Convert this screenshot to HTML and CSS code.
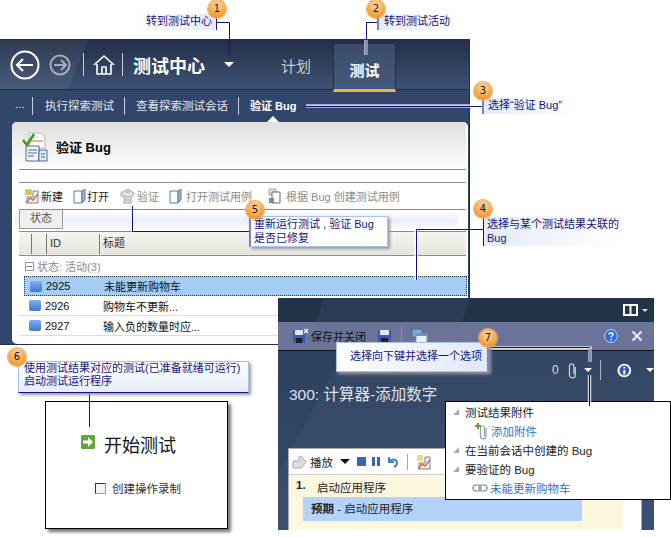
FILE: index.html
```html
<!DOCTYPE html>
<html lang="zh-CN">
<head>
    <meta charset="UTF-8">
    <title>验证 Bug</title>
    <link rel="stylesheet" href="styles.css">
</head>
<body>
<div class="figure">

    <!-- test center window -->
    <div class="window center">
        <div class="topbar">
            <svg class="nav-ico back" width="30" height="30" viewBox="0 0 30 30"><circle cx="15" cy="15" r="13.5" fill="none" stroke="#fff" stroke-width="2"/><path d="M23 15H8M13 9l-6 6 6 6" fill="none" stroke="#fff" stroke-width="2"/></svg>
            <svg class="nav-ico fwd" width="22" height="22" viewBox="0 0 22 22"><circle cx="11" cy="11" r="9.5" fill="none" stroke="#a6adb8" stroke-width="2"/><path d="M5 11h11M12 6l5 5-5 5" fill="none" stroke="#a6adb8" stroke-width="2"/></svg>
            <span class="nav-sep"></span>
            <svg class="nav-ico home" width="22" height="22" viewBox="0 0 22 22"><path d="M1 11 11 2l10 9M4 10v10h14V10M9 20v-7h4v7" fill="none" stroke="#fff" stroke-width="1.6"/></svg>
            <span class="nav-sep"></span>
            <b class="app-title">测试中心</b>
            <span class="caret big"></span>
            <span class="tab">计划</span>
            <span class="tab active">测试</span>
        </div>
        <div class="subnav">
            <span class="sub-more">...</span>
            <span class="sub-item">执行探索测试</span>
            <span class="sub-item">查看探索测试会话</span>
            <span class="sub-item current">验证 Bug</span>
        </div>
        <div class="panel">
            <div class="panel-head">
                <svg width="26" height="30" viewBox="0 0 26 30"><path d="M7 1h12l4 4v11H7z" fill="#fff" stroke="#a9b4c4"/><path d="M9 9h12" stroke="#d9662a"/><path d="M11 5h6" stroke="#c5ccd8"/><path d="M4 14h13v15H4z" fill="#f0f3f8" stroke="#4f6c92"/><path d="M17 18h8v11h-8z" fill="#dfe6f0" stroke="#4f6c92"/><path d="M6 18h9M6 21h9M6 24h6M19 22h4M19 25h4" stroke="#4f6c92"/><path d="M1 8l4 5 7-11" fill="none" stroke="#3f9a1c" stroke-width="2.6"/></svg>
                <b>验证 Bug</b>
            </div>
            <div class="toolbar">
                <span class="tool"><svg width="16" height="16" viewBox="0 0 16 16"><path d="M1 1h7v6H1z" fill="#f3d77e"/><path d="M1 3h7M1 5h7M3 1v6M5.500 1v6" stroke="#c9a53a" stroke-width=".7"/><path d="M9 3h5v12H3V9h6z" fill="#eef2f8" stroke="#6c85aa"/><path d="M2 15l4-5 3 2 5-6" fill="none" stroke="#d9662a" stroke-width="1.4"/></svg>新建</span>
                <span class="tool"><svg width="13" height="16" viewBox="0 0 13 16"><path d="M1 3h8v12H1z" fill="#fff" stroke="#5d7a9e"/><path d="M9 3l3-2v11l-3 3z" fill="#9db3cf" stroke="#5d7a9e"/></svg>打开</span>
                <span class="tool off"><svg width="17" height="16" viewBox="0 0 17 16"><path d="M2 5 9 1l6 4-1 3h-2v7H5V8H2z" fill="#e2e2e2" stroke="#a5a5a5"/><path d="M6 9h5M6 12h5M7 4h4" stroke="#a5a5a5"/></svg>验证</span>
                <span class="tool off wide"><svg width="13" height="16" viewBox="0 0 13 16"><path d="M1 3h8v12H1z" fill="#fff" stroke="#5d7a9e"/><path d="M9 3l3-2v11l-3 3z" fill="#9db3cf" stroke="#5d7a9e"/></svg><i class="tgap"></i>打开测试用例</span>
                <span class="tool off"><svg width="15" height="16" viewBox="0 0 15 16"><path d="M2 1h7v6H2z" fill="#ddd" stroke="#aaa"/><path d="M5 4h8v11H5z" fill="#fff" stroke="#666"/><path d="M2 10h5v5H2z" fill="#888"/></svg><i class="tgap"></i>根据 Bug 创建测试用例</span>
            </div>
            <div class="group-band"><span class="group-btn">状态</span></div>
            <div class="list-head">
                <span class="col c1"></span><span class="col c2"></span>
                <span class="col c3">ID</span><span class="col c4">标题</span>
            </div>
            <div class="group-row"><span class="minus"></span>状态: 活动(3)</div>
            <div class="row selected"><span class="sq"></span><span class="id">2925</span><span>未能更新购物车</span></div>
            <div class="row"><span class="sq"></span><span class="id">2926</span><span>购物车不更新...</span></div>
            <div class="row"><span class="sq"></span><span class="id">2927</span><span>输入负的数量时应...</span></div>
        </div>
    </div>

    <!-- test runner window -->
    <div class="window runner">
        <div class="run-top">
            <svg width="15" height="12" viewBox="0 0 15 12"><path d="M1 1h13v10H1zM7.5 1v10" fill="none" stroke="#fff" stroke-width="2"/></svg>
            <span class="caret small"></span>
        </div>
        <div class="run-tools">
            <svg width="17" height="16" viewBox="0 0 17 16"><path d="M1 2h12v13H1z" fill="#3c57b0"/><path d="M3 2h8v5H3z" fill="#dfe6f5"/><path d="M4 10h6v5H4z" fill="#222"/><path d="M12 1l4 4M16 1l-4 4" stroke="#fff" stroke-width="1.3"/></svg>
            <span class="save-label">保存并关闭</span>
            <svg class="save2" width="15" height="15" viewBox="0 0 15 15"><path d="M1 1h13v13H1z" fill="#3c57b0"/><path d="M3 1h9v5H3z" fill="#dfe6f5"/><path d="M4 9h7v5H4z" fill="#222"/></svg>
            <span class="tool-sep"></span>
            <svg width="17" height="16" viewBox="0 0 17 16"><path d="M1 1h10v8H1z" fill="#7fa6d6" stroke="#3f6ea8"/><path d="M5 6h11v9H5z" fill="#e8eef7" stroke="#8a97ad"/><path d="M5 6h11v2H5z" fill="#6f95c6"/></svg>
            <span class="push"></span>
            <svg class="help" width="14" height="14" viewBox="0 0 14 14"><circle cx="7" cy="7" r="6.5" fill="#2f6fd0" stroke="#bcd3f2"/><path d="M5 5.5C5 3.5 9 3.5 9 5.5 9 7 7 7 7 8.500M7 10v1.500" fill="none" stroke="#fff" stroke-width="1.400"/></svg>
            <svg width="12" height="12" viewBox="0 0 12 12"><path d="M1.500 1.500l9 9M10.500 1.500l-9 9" stroke="#e2e4ec" stroke-width="2.400"/></svg>
        </div>
        <div class="run-body">
            <div class="status-line">
                <span class="count">0</span>
                <svg width="9" height="17" viewBox="0 0 9 17"><path d="M7.500 5v8a3 3 0 0 1-6 0V4a2.200 2.200 0 0 1 4.500 0v8" fill="none" stroke="#c6cbd4" stroke-width="1.300"/></svg>
                <span class="caret mid"></span>
                <span class="status-sep"></span>
                <svg width="15" height="15" viewBox="0 0 15 15"><circle cx="7.500" cy="7.500" r="7" fill="#fff"/><circle cx="7.500" cy="7.500" r="5" fill="#2f56b0"/><path d="M7.500 4v1.500M7.500 7v4.500" stroke="#fff" stroke-width="2"/></svg>
                <span class="caret mid last"></span>
            </div>
            <h2 class="run-title">300: 计算器-添加数字</h2>
            <div class="steps">
                <div class="steps-bar">
                    <svg width="15" height="14" viewBox="0 0 15 14"><path d="M1 6h6V2l2-1 5 6-5 6H1z" fill="#ddd" stroke="#aaa"/></svg>
                    <span class="play">播放</span>
                    <span class="caret black"></span>
                    <span class="stop"></span>
                    <span class="pause"></span>
                    <svg width="13" height="12" viewBox="0 0 13 12"><path d="M3 1v5h5M3 6c3-4 8-3 8 1 0 2-1 3-3 4" fill="none" stroke="#3f7fd0" stroke-width="2"/></svg>
                    <span class="bar-sep"></span>
                    <svg width="16" height="16" viewBox="0 0 16 16"><path d="M1 1h6v6H1z" fill="#f3d77e"/><path d="M9 3h5v12H3V9h6z" fill="#eef2f8" stroke="#6c85aa"/><path d="M2 15l4-5 3 2 5-6" fill="none" stroke="#d9662a" stroke-width="1.400"/></svg>
                </div>
                <div class="steps-list">
                    <div class="step"><b>1.</b><span>启动应用程序</span></div>
                    <div class="expected"><b>预期</b> - 启动应用程序</div>
                </div>
            </div>
        </div>
    </div>

    <!-- attachments dropdown -->
    <div class="popup">
        <div class="pop-row"><span class="tri"></span>测试结果附件</div>
        <div class="pop-row sub link">
            <svg width="17" height="18" viewBox="0 0 17 18"><path d="M12 6v8a2.800 2.800 0 0 1-5.600 0V6a2 2 0 0 1 4 0v8" fill="none" stroke="#8d9bae" stroke-width="1.200"/><path d="M1 3h2V1h2v2h2v2H5v2H3V5H1z" fill="#5aa83c"/></svg>
            添加附件
        </div>
        <div class="pop-row"><span class="tri"></span>在当前会话中创建的 Bug</div>
        <div class="pop-row"><span class="tri"></span>要验证的 Bug</div>
        <div class="pop-row sub link bug">
            <svg width="16" height="8" viewBox="0 0 16 8"><rect x="1" y="1" width="8" height="6" rx="3" fill="none" stroke="#9aa3ad" stroke-width="1.500"/><rect x="7" y="1" width="8" height="6" rx="3" fill="none" stroke="#9aa3ad" stroke-width="1.500"/></svg>
            未能更新购物车
        </div>
    </div>

    <!-- start dialog -->
    <div class="start-box">
        <div class="start-title">
            <svg width="14" height="14" viewBox="0 0 14 14"><rect width="14" height="14" rx="1.500" fill="#5da83a"/><path d="M2 5.500h5V2l5 5-5 5V8.500H2z" fill="#fff"/></svg>
            开始测试
        </div>
        <label class="start-check"><span class="box"></span>创建操作录制</label>
    </div>

    <!-- leader lines -->
    <svg class="leaders" width="671" height="537" viewBox="0 0 671 537">
        <g class="halo">
            <path d="M366 40V55"/>
            <path d="M306 106H482"/>
            <path d="M416 229V280"/>
            <path d="M590 362V348H488"/>
            <path d="M589.500 375V406"/>
        </g>
        <g class="line">
            <path d="M217 22.500H229.500V55"/>
            <path d="M377 22.500H366.500V55"/>
            <path d="M306 106.500H482"/>
            <path d="M416.500 280V229.500H483"/>
            <path d="M132.500 206V231.500H249"/>
            <path d="M89.500 393V427"/>
            <path d="M488 347.500H590"/>
            <path d="M589.500 375V406"/>
        </g>
        <path class="thick" d="M366.500 40V55"/>
        <path class="thick" d="M590 349V362"/>
    </svg>

    <!-- callouts -->
    <div class="note n1">转到测试中心</div>
    <div class="note n2">转到测试活动</div>
    <div class="note n3">选择“验证 Bug”</div>
    <div class="note n4">选择与某个测试结果关联的<br>Bug</div>
    <div class="note box n5">重新运行测试 , 验证 Bug<br>是否已修复</div>
    <div class="note box n6">使用测试结果对应的测试(已准备就绪可运行)<br>启动测试运行程序</div>
    <div class="note box n7">选择向下键并选择一个选项</div>

    <span class="badge b1">1</span>
    <span class="badge b2">2</span>
    <span class="badge b3">3</span>
    <span class="badge b4">4</span>
    <span class="badge b5">5</span>
    <span class="badge b6">6</span>
    <span class="badge b7">7</span>
</div>
</body>
</html>
```

FILE: styles.css
```css
*{
    box-sizing: border-box;
}

body{
    margin: 0;
    background: #fff;
    font-family: "Liberation Sans", "Noto Sans CJK SC", sans-serif;
    font-size: 11px;
    color: #222;
}

.figure{
    position: relative;
    width: 671px;
    height: 537px;
    overflow: hidden;
}

.window{
    position: absolute;
}

/* test center window */
.center{
    left: 0;
    top: 39px;
    width: 470px;
    height: 306px;
    background: #31466a;
    border-right: 1px solid #1f2f4c;
    border-bottom: 1px solid #1f2f4c;
}

.topbar{
    display: flex;
    align-items: center;
    height: 51px;
    padding-left: 10px;
    border-top: 1px solid #222e44;
    border-bottom: 1px solid #24293a;
    background:
        linear-gradient(112deg, rgba(255,255,255,.06) 0 18%, rgba(255,255,255,0) 18%),
        linear-gradient(#232f49, #3f5273);
}

.nav-ico{
    flex: none;
}

.back{
    margin-right: 9px;
}

.fwd{
    margin-right: 12px;
}

.home{
    margin-right: 7px;
    margin-left: 0;
}

.nav-sep{
    width: 1px;
    height: 23px;
    background: #c9cfd9;
    margin-right: 9px;
}

.app-title{
    color: #fff;
    font-size: 18px;
    margin-left: 1px;
    width: 74px;
    white-space: nowrap;
}

.caret{
    display: inline-block;
    width: 0;
    height: 0;
    border-left: 5px solid transparent;
    border-right: 5px solid transparent;
    border-top: 5px solid #fff;
}

.caret.big{
    margin-left: 17px;
    margin-right: 47px;
}

.tab{
    color: #c4cad5;
    font-size: 15px;
    width: 52px;
    padding-top: 2px;
}

.tab.active{
    align-self: flex-end;
    width: 63px;
    height: 49px;
    margin-bottom: -3px;
    padding-top: 15px;
    text-align: center;
    color: #fff;
    font-weight: bold;
    background: linear-gradient(#3b4d6d, #46597b);
    border: 1px solid #2a2f3e;
    border-bottom: 3px solid #e8bb3f;
    border-radius: 3px 3px 0 0;
}

.subnav{
    display: flex;
    align-items: center;
    height: 32px;
    padding-left: 15px;
    color: #e4e7ee;
    font-size: 11.500px;
}

.sub-more{
    width: 17px;
    padding-bottom: 4px;
}

.sub-item{
    padding: 0 10px 0 11px;
    border-left: 1px solid #c9cfd9;
    line-height: 18px;
    white-space: nowrap;
}

.sub-item:nth-child(2){
    padding-left: 12px;
}

.current{
    position: relative;
    color: #fff;
    font-weight: bold;
    font-size: 11px;
}

.current::after{
    content: "";
    position: absolute;
    left: 28px;
    bottom: -7px;
    border-left: 6px solid transparent;
    border-right: 6px solid transparent;
    border-bottom: 6px solid #fff;
}

.panel{
    position: relative;
    height: 222px;
    margin: 0 1px 0 12px;
    background: #fff;
    border-radius: 5px 5px 0 5px;
}

.panel-head{
    display: flex;
    align-items: center;
    gap: 8px;
    height: 48px;
    margin-right: 2px;
    padding-left: 10px;
    padding-top: 1px;
    font-size: 13px;
    color: #000;
    background: linear-gradient(#dedede, #fff);
    border-radius: 5px 5px 0 0;
    position: relative;
}

.panel-head::after{
    content: "";
    position: absolute;
    left: 7px;
    right: 0;
    bottom: 0;
    border-bottom: 1px solid #8a8a8a;
}

.toolbar{
    display: flex;
    align-items: center;
    height: 28px;
    margin: 12px 2px 0 7px;
    padding-left: 5px;
    gap: 10px;
    font-size: 11px;
    border-top: 1px solid #8c8c8c;
    border-bottom: 1px solid #8c8c8c;
}

.tool{
    display: flex;
    align-items: center;
    gap: 1px;
    white-space: nowrap;
}

.tgap{
    width: 2px;
}

.tool.off{
    color: #8b8b8b;
}

.tool.wide{
    margin-right: 5px;
}

.group-band{
    height: 21px;
    margin: 0 10px 0 3px;
    padding-left: 4px;
    background: linear-gradient(#fff, #e9eef9 50%, #fff);
}

.group-btn{
    display: inline-block;
    width: 44px;
    height: 19px;
    line-height: 17px;
    text-align: center;
    color: #555;
    background: #efefef;
    border: 1px solid #999;
    border-top: 0;
}

.list-head{
    display: flex;
    height: 25px;
    margin: 0 2px 0 7px;
    border-top: 1px solid #8c8c8c;
    border-bottom: 1px solid #8c8c8c;
    background: linear-gradient(#f6f5f1, #e6e4dc);
    align-items: center;
}

.col{
    height: 20px;
    line-height: 19px;
    padding-left: 3px;
    border-right: 1px solid #777;
    color: #333;
}

.c1{
    width: 13px;
}

.c2{
    width: 15px;
}

.c3{
    width: 53px;
}

.c4{
    border-right: 0;
}

.group-row{
    display: flex;
    align-items: center;
    gap: 3px;
    height: 20px;
    margin-left: 13px;
    color: #8a8a8a;
}

.minus{
    position: relative;
    width: 9px;
    height: 9px;
    border: 1px solid #999;
}

.minus::after{
    content: "";
    position: absolute;
    left: 1px;
    right: 1px;
    top: 3px;
    border-top: 1px solid #777;
}

.row{
    display: flex;
    align-items: center;
    height: 20px;
    margin: 0 2px 0 7px;
    padding-left: 10px;
    border-bottom: 1px solid #ddd;
    color: #111;
    white-space: nowrap;
}

.row.selected{
    margin-left: 12px;
    margin-right: 1px;
    padding-left: 5px;
    background: #a3cdf5;
    border: 1px dotted #333;
}

.sq{
    width: 12px;
    height: 11px;
    margin-right: 4px;
    border-radius: 2px;
    background: linear-gradient(#7fb0ec, #3f79cf);
}

.id{
    width: 58px;
}

/* test runner window */
.runner{
    left: 278px;
    top: 298px;
    width: 376px;
    height: 232px;
    background: #31466a;
}

.run-top{
    display: flex;
    align-items: center;
    justify-content: flex-end;
    gap: 4px;
    height: 24px;
    padding: 0 6px 0 0;
    background:
        linear-gradient(107deg, #22344a 0 12%, #2b3d55 12% 50%, #22344a 50%);
}

.caret.small{
    border-width: 3px 3px 0;
    border-top-color: #ddd;
}

.run-tools{
    display: flex;
    align-items: center;
    height: 29px;
    padding: 0 11px 0 14px;
    background: #6b7399;
    border-bottom: 1px solid #111;
    color: #111;
}

.save-label{
    margin-left: 2px;
    font-size: 11px;
}

.save2{
    margin-left: 11px;
}

.tool-sep{
    width: 1px;
    height: 20px;
    background: #8a90ad;
    margin: 0 9px;
}

.push{
    flex: 1;
}

.help{
    margin-right: 13px;
}

.run-body{
    height: 179px;
    padding-top: 10px;
    background:
        linear-gradient(118deg, rgba(255,255,255,0) 0 14%, rgba(255,255,255,.03) 14% 100%),
        linear-gradient(#2e415f, #35496c);
}

.status-line{
    display: flex;
    align-items: center;
    height: 18px;
    padding-left: 274px;
    color: #d8dbe2;
    font-size: 12px;
}

.count{
    width: 16px;
}

.caret.mid{
    margin-left: 8px;
    border-width: 4px 4px 0;
}

.status-sep{
    width: 1px;
    height: 20px;
    margin: 0 16px 0 8px;
    background: #aab0bd;
}

.caret.last{
    margin-left: 14px;
}

.run-title{
    margin: 4px 0 0 11px;
    color: #dfe2e8;
    font-size: 15.500px;
    font-weight: normal;
    line-height: 24px;
}

.steps{
    position: absolute;
    left: 10px;
    top: 150px;
    width: 354px;
    height: 82px;
    background: #fff;
    border: 1px solid #aaa;
    border-bottom: 0;
}

.steps-bar{
    display: flex;
    align-items: center;
    height: 25px;
    padding-left: 3px;
    gap: 3px;
    font-size: 11.500px;
}

.play{
    margin-right: 4px;
}

.caret.black{
    border-top-color: #111;
    margin-right: 4px;
}

.stop{
    width: 9px;
    height: 9px;
    margin-right: 3px;
    background: #3a62b8;
}

.pause{
    width: 8px;
    height: 9px;
    margin-right: 3px;
    border-left: 3px solid #3a62b8;
    border-right: 3px solid #3a62b8;
}

.bar-sep{
    width: 1px;
    height: 16px;
    margin: 0 5px 0 5px;
    background: #aaa;
}

.steps-list{
    height: 55px;
    margin-right: 18px;
    padding-top: 2px;
    background: #fdf7e0;
    border-top: 1px solid #ccc;
}

.step{
    display: flex;
    height: 20px;
    padding: 2px 0 0 7px;
    font-size: 11.500px;
}

.step b{
    width: 21px;
}

.expected{
    height: 24px;
    margin: 0 41px 0 14px;
    padding: 3px 0 0 8px;
    line-height: 18px;
    background: #b3d3fb;
    font-size: 11.500px;
}

/* dropdown */
.popup{
    position: absolute;
    left: 445px;
    top: 401px;
    width: 226px;
    height: 99px;
    background: #fff;
    border: 1px solid #000;
    font-size: 11.500px;
}

.pop-row{
    display: flex;
    align-items: center;
    height: 19px;
    padding-left: 7px;
    color: #222;
    white-space: nowrap;
}

.tri{
    width: 0;
    height: 0;
    margin-right: 6px;
    border-left: 6px solid transparent;
    border-bottom: 6px solid #aaa;
}

.pop-row.sub{
    padding-left: 28px;
}

.pop-row.bug{
    padding-left: 26px;
    gap: 2px;
}

.link{
    color: #2f73c9;
}

/* start dialog */
.start-box{
    position: absolute;
    left: 45px;
    top: 401px;
    width: 183px;
    height: 128px;
    background: #fff;
    border: 1px solid #000;
    box-shadow: 3px 3px 3px #777;
    padding-top: 29px;
}

.start-title{
    display: flex;
    align-items: center;
    gap: 9px;
    padding-left: 35px;
    font-size: 18px;
    color: #111;
}

.start-title svg{
    margin-top: -5px;
}

.start-check{
    display: flex;
    align-items: center;
    gap: 6px;
    margin-top: 23px;
    padding-left: 49px;
    color: #333;
    font-size: 11.500px;
}

.box{
    width: 11px;
    height: 11px;
    background: #f4f4f4;
    border: 1px solid #999;
    border-top-color: #333;
    border-left-color: #333;
}

/* callouts */
.leaders{
    position: absolute;
    left: 0;
    top: 0;
    pointer-events: none;
}

.leaders path{
    fill: none;
}

.halo path{
    stroke: #fff;
    stroke-width: 3.500;
    opacity: .75;
}

.line path{
    stroke: #12127a;
    stroke-width: 1;
}

.leaders .thick{
    stroke: #8c8cc0;
    stroke-width: 3;
}

.note{
    position: absolute;
    padding: 0 6px;
    color: #14147a;
    font-size: 11px;
    line-height: 15px;
    white-space: nowrap;
    background: linear-gradient(to right, #e3eafa, #fff);
}

.n1{
    left: 136px;
    top: 14px;
    width: 81px;
    height: 16px;
    padding: 0 0 0 10px;
    border-right: 1px solid #12127a;
    background: linear-gradient(to left, #e3eafa, #fff);
}

.n2{
    left: 377px;
    top: 14px;
    width: 82px;
    height: 16px;
    padding-left: 5px;
    border-left: 2px solid #8080b8;
}

.n3{
    left: 482px;
    top: 98px;
    width: 92px;
    height: 16px;
    padding-left: 4px;
    border-left: 2px solid #8080b8;
}

.n4{
    left: 483px;
    top: 217px;
    width: 137px;
    height: 29px;
    padding-left: 3px;
    line-height: 14px;
    border-left: 1px solid #12127a;
}

.note.box{
    border: 1px solid #a9c3e8;
    box-shadow: 2px 2px 3px #999;
    background: linear-gradient(#fff, #e4ecfb);
}

.n5{
    left: 249px;
    top: 216px;
    width: 139px;
    height: 31px;
    padding-left: 3px;
    line-height: 14px;
    border-left: 2px solid #8080b8 !important;
    background: #fff !important;
}

.n6{
    left: 18px;
    top: 361px;
    width: 231px;
    height: 32px;
    padding-left: 5px;
    line-height: 13px;
    border-bottom: 1px solid #12127a !important;
}

.n7{
    left: 336px;
    top: 342px;
    width: 153px;
    height: 30px;
    padding: 6px 0 0 13px;
    border-right: 2px solid #8080b8 !important;
    background: linear-gradient(to right, #fff, #dfe8fa) !important;
}

.badge{
    position: absolute;
    width: 18px;
    height: 18px;
    line-height: 18px;
    text-align: center;
    font-family: "DejaVu Sans", sans-serif;
    font-size: 10px;
    color: #111;
    border-radius: 50%;
    background: radial-gradient(circle at 50% 30%, #fdd9a4, #f59a32 70%, #ee8a20);
    box-shadow: 0 0 0 1px #f4a85a;
}

.b1{
    left: 208px;
    top: 0;
}

.b2{
    left: 367px;
    top: 0;
}

.b3{
    left: 474px;
    top: 82px;
}

.b4{
    left: 474px;
    top: 200px;
}

.b5{
    left: 246px;
    top: 201px;
}

.b6{
    left: 8px;
    top: 348px;
}

.b7{
    left: 479px;
    top: 329px;
}
```
